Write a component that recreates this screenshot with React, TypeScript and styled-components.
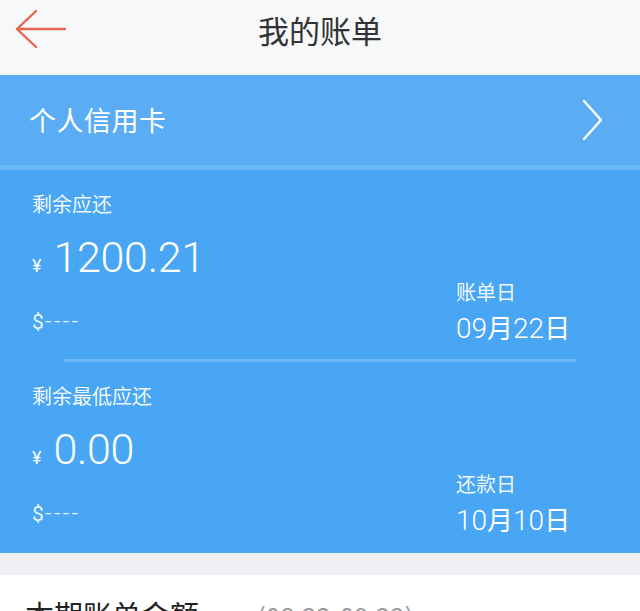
import React from 'react';
import styled, { createGlobalStyle } from 'styled-components';

const GlobalStyle = createGlobalStyle`
  body {
    margin: 0;
    background: #ffffff;
    font-family: 'Noto Sans CJK SC', 'Noto Sans', sans-serif;
  }
`;

type Bill = {
  label: string;
  amount: string;
  dayLabel: string;
  day: [string, string];
};

const bills: Bill[] = [
  { label: '剩余应还', amount: '1200.21', dayLabel: '账单日', day: ['09', '22'] },
  { label: '剩余最低应还', amount: '0.00', dayLabel: '还款日', day: ['10', '10'] },
];

const BackArrow = () => (
  <svg width="52" height="40" viewBox="0 0 52 40" fill="none">
    <path d="M50 19H2M21 1L2 19l19 18" stroke="#e8644d" strokeWidth="2.4" strokeLinecap="round" strokeLinejoin="round" />
  </svg>
);

const Chevron = () => (
  <svg width="22" height="42" viewBox="0 0 22 42" fill="none">
    <path d="M2 2l17 19L2 40" stroke="#ffffff" strokeWidth="2.4" strokeLinecap="round" strokeLinejoin="round" />
  </svg>
);

export default function App() {
  return (
    <Page>
      <GlobalStyle />
      <NavBar>
        <BackButton>
          <BackArrow />
        </BackButton>
        <Title>我的账单</Title>
        <span />
      </NavBar>

      <Card>
        <CardHeader>
          <CardName>个人信用卡</CardName>
          <Chevron />
        </CardHeader>
        <CardBody>
          {bills.map((b, i) => (
            <React.Fragment key={b.label}>
              {i > 0 && <Divider />}
              <Section>
                <LeftCol>
                  <Label>{b.label}</Label>
                  <AmountRow>
                    <Yen>¥</Yen>
                    <Amount>{b.amount}</Amount>
                  </AmountRow>
                  <Dollar>
                    $<Dashes>----</Dashes>
                  </Dollar>
                </LeftCol>
                <RightCol>
                  <Label>{b.dayLabel}</Label>
                  <DateText>
                    <Num>{b.day[0]}</Num>月<Num>{b.day[1]}</Num>日
                  </DateText>
                </RightCol>
              </Section>
            </React.Fragment>
          ))}
        </CardBody>
      </Card>

      <Gap />

      <SummaryRow>
        <SummaryTitle>本期账单金额</SummaryTitle>
        <SummaryRange>(08.23-09.22)</SummaryRange>
      </SummaryRow>
    </Page>
  );
}

const Page = styled.div`
  width: 640px;
  height: 611px;
  overflow: hidden;
`;

const NavBar = styled.header`
  height: 75px;
  background: #f7f8fa;
  display: grid;
  grid-template-columns: 80px 1fr 80px;
  align-items: start;
`;

const BackButton = styled.div`
  padding: 10px 0 0 15px;
  display: flex;
`;

const Title = styled.h1`
  margin: 0;
  text-align: center;
  font-size: 31px;
  font-weight: 400;
  line-height: 60px;
  color: #333333;
`;

const Card = styled.section`
  color: #ffffff;
`;

const CardHeader = styled.div`
  background: #5aadf5;
  border-bottom: 5px solid #68b8f7;
  box-sizing: border-box;
  height: 95px;
  padding: 0 36px 0 29px;
  display: flex;
  align-items: center;
  justify-content: space-between;
`;

const CardName = styled.div`
  font-size: 27px;
  line-height: 36px;
  letter-spacing: 0.5px;
`;

const CardBody = styled.div`
  background: #48a6f4;
  padding-bottom: 2px;
`;

const Section = styled.div`
  display: grid;
  grid-template-columns: 1fr 184px;
  align-items: start;
  padding: 21px 0 15px 32px;
`;

const LeftCol = styled.div`
  display: flex;
  flex-direction: column;
`;

const RightCol = styled.div`
  display: flex;
  flex-direction: column;
  padding-top: 88px;
  gap: 5px;
`;

const Label = styled.div`
  height: 26px;
  font-size: 20px;
  line-height: 26px;
  color: rgba(255, 255, 255, 0.94);
`;

const AmountRow = styled.div`
  height: 52px;
  margin-top: 14px;
  display: flex;
  align-items: baseline;
  gap: 12px;
  line-height: 52px;
`;

const Yen = styled.span`
  font-family: Roboto, 'Noto Sans', sans-serif;
  font-size: 18px;
`;

const Amount = styled.span`
  font-family: Roboto, 'Noto Sans', sans-serif;
  font-weight: 300;
  font-size: 43px;
  letter-spacing: -0.3px;
`;

const Dollar = styled.div`
  height: 26px;
  margin-top: 25px;
  font-family: Roboto, 'Noto Sans', sans-serif;
  font-size: 21px;
  line-height: 26px;
  color: rgba(255, 255, 255, 0.9);
`;

const Dashes = styled.span`
  margin-left: 1px;
  letter-spacing: 2px;
  font-size: 24px;
  font-weight: 300;
`;

const DateText = styled.div`
  height: 34px;
  font-size: 26px;
  line-height: 34px;
`;

const Num = styled.span`
  font-family: Roboto, 'Noto Sans', sans-serif;
  font-weight: 300;
  font-size: 28px;
`;

const Divider = styled.div`
  height: 3px;
  margin: 0 64px;
  background: #6bb8f6;
`;

const Gap = styled.div`
  height: 22px;
  background: #efeff4;
`;

const SummaryRow = styled.div`
  background: #ffffff;
  display: flex;
  align-items: baseline;
  gap: 58px;
  padding: 19px 0 0 25px;
`;

const SummaryTitle = styled.div`
  font-size: 29px;
  line-height: 40px;
  color: #222222;
`;

const SummaryRange = styled.div`
  font-size: 26px;
  line-height: 40px;
  color: #9a9a9a;
`;
